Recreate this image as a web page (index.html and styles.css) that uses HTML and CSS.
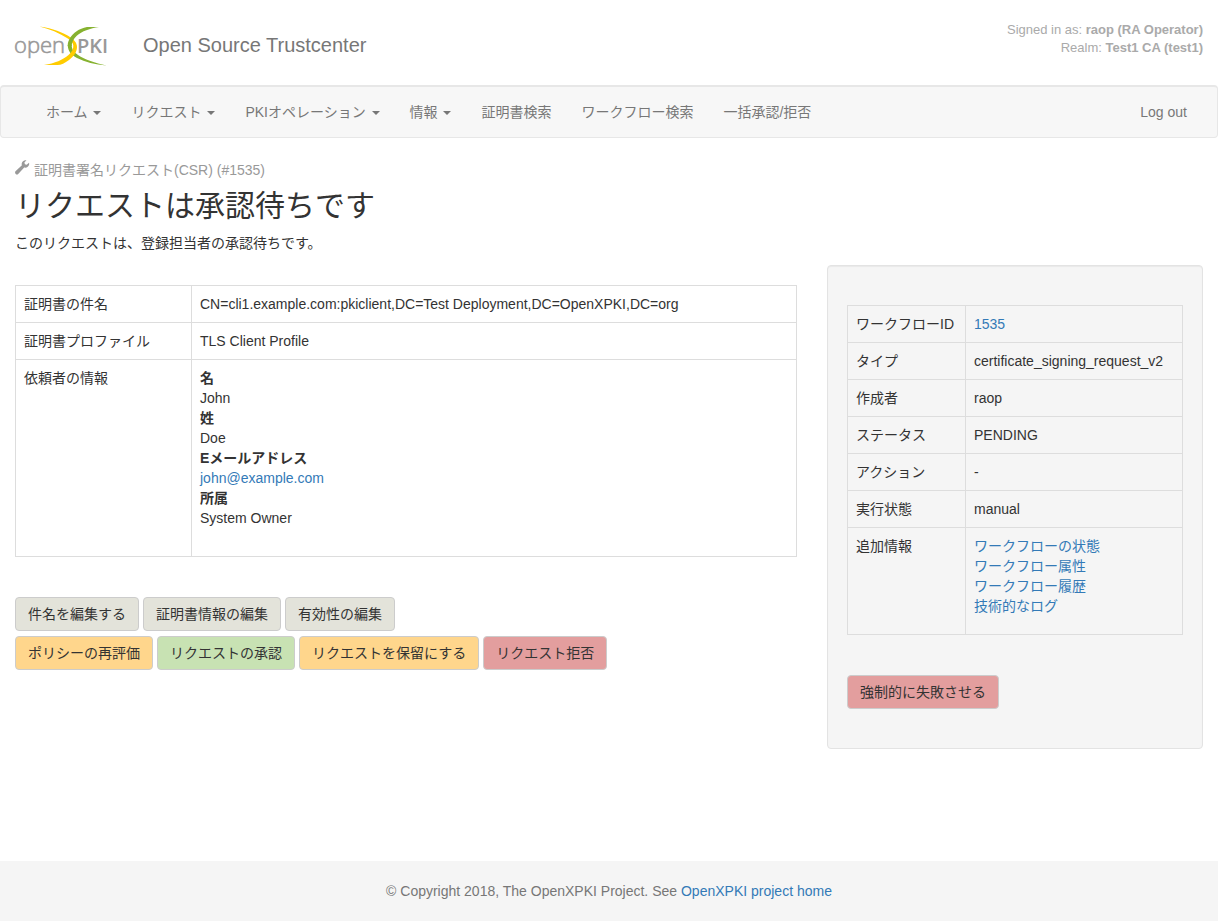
FILE: index.html
```html
<!DOCTYPE html>
<html lang="ja">
<head>
<meta charset="utf-8">
<title>OpenXPKI - Open Source Trustcenter</title>
<link rel="stylesheet" href="styles.css">
</head>
<body>
<header class="header">
  <svg class="logo" width="94" height="42" viewBox="0 0 94 42" role="img" aria-label="OpenXPKI">
    <text class="logo-open" x="-1" y="29">open</text>
    <text class="logo-pki" x="62" y="29">PKI</text>
    <path fill="#86b230" d="M52.700 21C53 27 56 31 62 34C70 38 80 40.500 91.500 41.500C80 39 70 35.500 63 31C58.500 28 56.700 25 56.700 21Z"/>
    <path fill="#fc0" d="M24.500 2.500C38 4.500 48 8.500 55 13C59.500 16 62 19 62 23C62 28 59 32 54 36C50 39 46 41 42.500 41H29C40 39.500 48 35.500 53.500 31C57 28 58.500 25 58.300 21.500C58 18.500 56 16.500 52 14C44 9 35 5 24.500 2.500Z"/>
    <path fill="#86b230" d="M84 3H72C64 4.500 58 9 55 14C53.500 16.500 52.700 19 52.700 22H56.700C56.800 18 58.500 15 61.500 12C67 7 75 4.500 84 3Z"/>
  </svg>
  <div class="site-title">Open Source Trustcenter</div>
  <div class="session">
    <div>Signed in as: <strong>raop (RA Operator)</strong></div>
    <div>Realm: <strong>Test1 CA (test1)</strong></div>
  </div>
</header>
<nav class="navbar">
  <a href="#">ホーム <span class="caret"></span></a>
  <a href="#">リクエスト <span class="caret"></span></a>
  <a href="#">PKIオペレーション <span class="caret"></span></a>
  <a href="#">情報 <span class="caret"></span></a>
  <a href="#">証明書検索</a>
  <a href="#">ワークフロー検索</a>
  <a href="#">一括承認/拒否</a>
  <a class="logout" href="#">Log out</a>
</nav>
<main class="page">
  <div class="intro">
    <div class="crumb">
      <svg class="wrench" width="15" height="15" viewBox="0 0 15 15" aria-hidden="true"><path fill="#999" d="M11.500.3C9.300-.3 7 1.200 6.700 3.500C6.600 4.200 6.700 4.700 6.900 5.300L.5 11.300C-.2 12 0 13.200.7 13.900C1.400 14.600 2.500 14.600 3.200 13.900L9.200 7.600C11.500 8.200 13.700 6.700 14.100 4.600C14.200 4 14.200 3.400 14 2.700L11.700 4.800L9.900 4.300L9.400 2.500Z"/></svg>
      <span>証明書署名リクエスト(CSR) (#1535)</span>
    </div>
    <h1>リクエストは承認待ちです</h1>
    <p>このリクエストは、登録担当者の承認待ちです。</p>
  </div>
  <div class="columns">
    <section class="main-col">
      <table class="details request">
        <tr><th scope="row">証明書の件名</th><td>CN=cli1.example.com:pkiclient,DC=Test Deployment,DC=OpenXPKI,DC=org</td></tr>
        <tr><th scope="row">証明書プロファイル</th><td>TLS Client Profile</td></tr>
        <tr><th scope="row">依頼者の情報</th><td>
          <dl>
            <dt>名</dt><dd>John</dd>
            <dt>姓</dt><dd>Doe</dd>
            <dt>Eメールアドレス</dt><dd><a href="mailto:john@example.com">john@example.com</a></dd>
            <dt>所属</dt><dd>System Owner</dd>
          </dl>
        </td></tr>
      </table>
      <div class="actions">
        <div class="button-row">
          <button class="btn" type="button">件名を編集する</button>
          <button class="btn" type="button">証明書情報の編集</button>
          <button class="btn" type="button">有効性の編集</button>
        </div>
        <div class="button-row">
          <button class="btn btn-wait" type="button">ポリシーの再評価</button>
          <button class="btn btn-approve" type="button">リクエストの承認</button>
          <button class="btn btn-wait" type="button">リクエストを保留にする</button>
          <button class="btn btn-fail" type="button">リクエスト拒否</button>
        </div>
      </div>
    </section>
    <aside class="side-col">
      <div class="well">
        <table class="details workflow">
          <tr><th scope="row">ワークフローID</th><td><a href="#">1535</a></td></tr>
          <tr><th scope="row">タイプ</th><td>certificate_signing_request_v2</td></tr>
          <tr><th scope="row">作成者</th><td>raop</td></tr>
          <tr><th scope="row">ステータス</th><td>PENDING</td></tr>
          <tr><th scope="row">アクション</th><td>-</td></tr>
          <tr><th scope="row">実行状態</th><td>manual</td></tr>
          <tr><th scope="row">追加情報</th><td>
            <ul>
              <li><a href="#">ワークフローの状態</a></li>
              <li><a href="#">ワークフロー属性</a></li>
              <li><a href="#">ワークフロー履歴</a></li>
              <li><a href="#">技術的なログ</a></li>
            </ul>
          </td></tr>
        </table>
        <div class="actions">
          <div class="button-row"><button class="btn btn-fail" type="button">強制的に失敗させる</button></div>
        </div>
      </div>
    </aside>
  </div>
</main>
<footer class="footer">© Copyright 2018, The OpenXPKI Project. See <a href="#">OpenXPKI project home</a></footer>
</body>
</html>
```
FILE: styles.css
```css
* { box-sizing: border-box; }

body {
  display: flex;
  flex-direction: column;
  min-height: 100vh;
  margin: 0;
  background: #fff;
  color: #333;
  font: 14px/20px "Liberation Sans", "Noto Sans CJK JP", sans-serif;
}

a { color: #337ab7; text-decoration: none; }
a:hover { text-decoration: underline; }

/* Header */
.header {
  display: flex;
  align-items: flex-start;
  padding: 21px 15px 16px;
}
.logo { flex: none; margin-top: 3px; overflow: visible; }
.logo-open { font: 300 22px "Open Sans", sans-serif; fill: #999; stroke: #999; stroke-width: .6px; }
.logo-pki { font: 600 20px "Open Sans", sans-serif; fill: #999; }
.site-title { margin-left: 34px; color: #777; font-size: 20px; line-height: 48px; }
.session { margin-left: auto; color: #aaa; font-size: 13px; line-height: 18px; text-align: right; }

/* Navigation */
.navbar {
  display: flex;
  align-items: center;
  min-height: 53px;
  padding: 0 15px 0 30px;
  border: 1px solid #e7e7e7;
  border-top-width: 2px;
  border-radius: 4px;
  background: #f7f7f7;
}
.navbar a { padding: 15px; color: #777; white-space: nowrap; }
.navbar .logout { margin-left: auto; }
.caret {
  display: inline-block;
  margin-left: 2px;
  vertical-align: middle;
  border: 4px solid transparent;
  border-top-color: #777;
  border-bottom: 0;
}

/* Page body */
.page { flex: 1; padding-bottom: 20px; }
.intro { padding: 22px 15px 12px; }
.crumb { display: flex; gap: 4px; color: #999; }
h1 { margin: 9px 0 10px; font-size: 30px; font-weight: 400; line-height: 34px; }
p { margin: 0; }

.columns { display: flex; }
.main-col { width: 66.667%; padding: 20px 15px 0; }
.side-col { width: 33.333%; padding: 0 15px; }

.well {
  padding: 39px 19px;
  border: 1px solid #e3e3e3;
  border-radius: 4px;
  background: #f5f5f5;
  box-shadow: inset 0 1px 1px rgba(0, 0, 0, .05);
}

.details { width: 100%; border-collapse: collapse; }
.details th,
.details td {
  padding: 8px;
  border: 1px solid #ddd;
  font-weight: 400;
  text-align: left;
  vertical-align: top;
}
.request th { width: 176px; }
.workflow th { width: 118px; white-space: nowrap; }

dl { margin: 0 0 20px; }
dt { font-weight: 700; }
dd { margin: 0; }
ul { margin: 0 0 10px; padding: 0; list-style: none; }

/* Buttons */
.actions { display: grid; gap: 5px; margin-top: 40px; }
.button-row { display: flex; flex-wrap: wrap; gap: 4px; }
.btn {
  padding: 6px 12px;
  border: 1px solid #ccc;
  border-radius: 4px;
  background: #e3e3da;
  color: #333;
  font: inherit;
  cursor: pointer;
}
.btn-wait { background: #ffd68c; }
.btn-approve { background: #c8e2b3; }
.btn-fail { background: #e39e9e; }

.footer {
  padding: 20px 15px;
  background: #f5f5f5;
  color: #777;
  text-align: center;
}
```
